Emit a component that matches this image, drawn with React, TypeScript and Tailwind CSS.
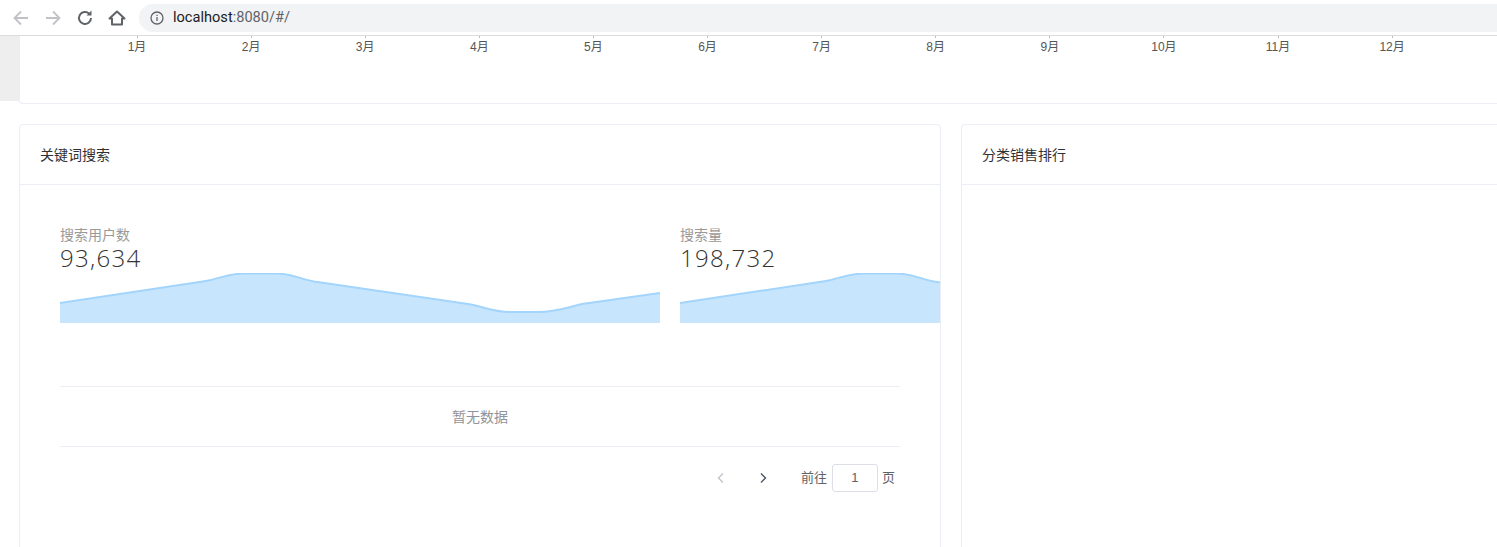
const font = '"Liberation Sans","Noto Sans CJK SC",sans-serif';
const months = ['1月','2月','3月','4月','5月','6月','7月','8月','9月','10月','11月','12月'];
const curve = 'M0 30 L146 8 C158 6 168 0.5 184 0.5 L216 0.5 C232 0.5 240 6 254 8.6 L408 31 C422 33 432 39 450 39 L478 39 C496 39 505 35 522 31 L600 20';

function Spark({ width }: { width: number }) {
  return (
    <svg width={width} height={50} viewBox={"0 0 " + width + " 50"} className="block">
      <path d={curve + ' L600 50 L0 50 Z'} fill="#c7e6fe" />
      <path d={curve} fill="none" stroke="#a3d4fb" strokeWidth="2" />
    </svg>
  );
}

function Metric({ label, value, width }: { label: string; value: string; width: number }) {
  return (
    <div className="shrink-0" style={{ width }}>
      <div className="text-[14px] leading-[20px] text-[#999]">{label}</div>
      <div className="mt-[-1px] h-[29px] text-[24px] font-[350] leading-[28px] tracking-[1.3px] text-[#333] font-['Open_Sans',sans-serif]">{value}</div>
      <Spark width={width} />
    </div>
  );
}

export default function App() {
  return (
    <div className="h-[547px] w-[1497px] overflow-hidden bg-white" style={{ fontFamily: font }}>
      <div className="flex h-[36px] items-center border-b border-[#dadce0] bg-white">
        <svg width="20" height="20" viewBox="0 0 20 20" className="ml-[11px]" fill="none" stroke="#c0c2c5" strokeWidth="1.8"><path d="M17 10H4M10 3.5 3.5 10l6.5 6.5" /></svg>
        <svg width="20" height="20" viewBox="0 0 20 20" className="ml-[12px]" fill="none" stroke="#c0c2c5" strokeWidth="1.8"><path d="M3 10h13M10 3.5l6.5 6.5-6.5 6.5" /></svg>
        <svg width="20" height="20" viewBox="0 0 20 20" className="ml-[12px]" fill="none" stroke="#5f6368" strokeWidth="2"><path d="M16 10a6 6 0 1 1-1.8-4.3" /><path d="M16.5 2.5v5h-5z" fill="#5f6368" stroke="none" /></svg>
        <svg width="20" height="20" viewBox="0 0 20 20" className="ml-[12px]" fill="none" stroke="#5f6368" strokeWidth="2"><path d="M2.5 10.5 10 3.5l7.5 7H15v6H5v-6z" strokeLinejoin="round" /></svg>
        <div className="ml-[12px] flex h-[28px] w-[1358px] items-center rounded-l-[14px] bg-[#f1f3f4] pl-[11px]">
          <svg width="14" height="14" viewBox="0 0 14 14" fill="none" stroke="#5f6368" strokeWidth="1.3"><circle cx="7" cy="7" r="6" /><path d="M7 6v4M7 3.7v1.3" /></svg>
          <span className="ml-[9px] text-[14.6px] font-['Roboto',sans-serif] text-[#5f6368]"><span className="text-[#202124]">localhost</span>:8080/#/</span>
        </div>
      </div>

      <div className="flex h-[68px] bg-white">
        <div className="h-[65px] w-[19px] bg-[#eeeeee]" />
        <div className="flex-1 rounded-bl-[4px] border-b border-l border-[#ebeef5]">
          <div className="relative h-[66px]">
            {months.map((m, i) => (
              <div key={m} className="absolute top-0 flex w-[40px] flex-col items-center" style={{ left: 97 + i * 114.1 }}>
                <div className="h-[2px] w-px bg-[#bbb]" />
                <div className="mt-[1px] text-[12px] leading-[17px] text-[#555]">{m}</div>
              </div>
            ))}
          </div>
        </div>
      </div>

      <div className="flex gap-[20px] pl-[19px] pt-[20px]">
        <div className="h-[440px] w-[922px] shrink-0 rounded-[4px] border border-[#ebeef5]">
          <div className="flex h-[60px] items-center border-b border-[#ebeef5] px-[20px] pt-[2px] text-[14px] text-[#303133]">关键词搜索</div>
          <div className="px-[40px] pt-[40px]">
            <div className="flex w-[880px] gap-[20px] overflow-hidden">
              <Metric label="搜索用户数" value="93,634" width={600} />
              <Metric label="搜索量" value="198,732" width={600} />
            </div>
            <div className="mt-[63px] w-[840px] border-y border-[#ebeef5]">
              <div className="flex h-[59px] items-center justify-center pt-[2px] text-[14px] text-[#909399]">暂无数据</div>
            </div>
            <div className="mt-[17px] flex w-[840px] items-center justify-end text-[13px] text-[#606266]">
              <svg width="12" height="12" viewBox="0 0 12 12" fill="none" stroke="#c0c4cc" strokeWidth="1.4"><path d="M8 1.5 3.5 6 8 10.5" /></svg>
              <svg width="12" height="12" viewBox="0 0 12 12" className="ml-[30px]" fill="none" stroke="#4d5566" strokeWidth="1.4"><path d="M4 1.5 8.5 6 4 10.5" /></svg>
              <span className="ml-[32px]">前往</span>
              <span className="ml-[5px] flex h-[28px] w-[46px] items-center justify-center rounded-[3px] border border-[#dcdfe6] text-[#606266]">1</span>
              <span className="ml-[4px] mr-[5px]">页</span>
            </div>
          </div>
        </div>
        <div className="h-[440px] flex-1 rounded-l-[4px] border-y border-l border-[#ebeef5]">
          <div className="flex h-[60px] items-center border-b border-[#ebeef5] px-[20px] pt-[2px] text-[14px] text-[#303133]">分类销售排行</div>
        </div>
      </div>
    </div>
  );
}
